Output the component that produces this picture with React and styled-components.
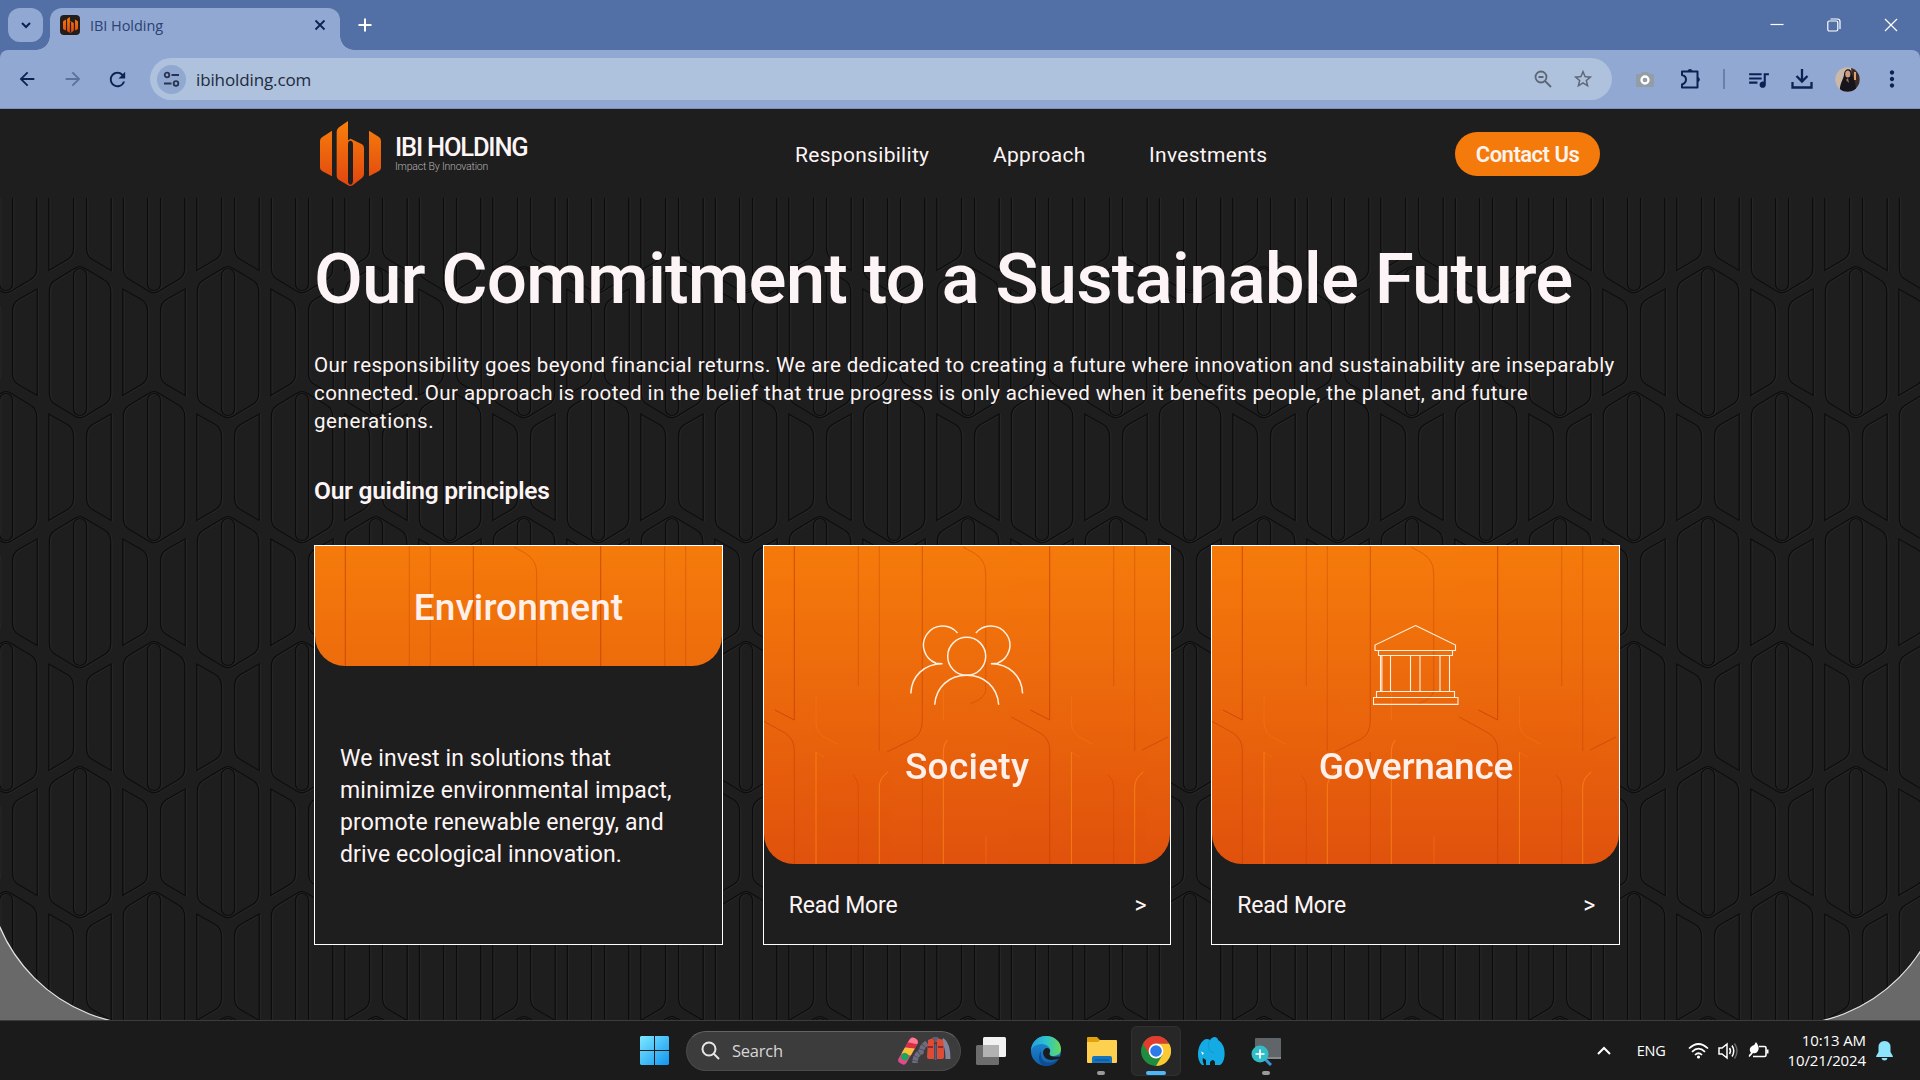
import React from "react";
import styled, { createGlobalStyle } from "styled-components";
import { MdArrowBack, MdArrowForward, MdRefresh, MdStarBorder, MdMoreVert, MdQueueMusic } from "react-icons/md";

const GlobalStyle = createGlobalStyle`
  * { box-sizing: border-box; }
  body { margin: 0; overflow: hidden; background: #1e1e1e; }
  h1, h2, h3, p { margin: 0; }
  svg { display: block; flex: none; }
`;

const brand = `"Roboto", "Liberation Sans", sans-serif`;
const system = `"Open Sans", "Noto Sans", sans-serif`;

const Screen = styled.div`
  width: 1920px;
  height: 1080px;
  display: flex;
  flex-direction: column;
  overflow: hidden;
  font-family: ${brand};
  color: #fdf5f5;
`;

/* ---------- Browser ---------- */

const TabStrip = styled.div`
  height: 50px;
  flex: none;
  display: flex;
  padding: 8px 1px 0 8px;
  background: #5270a6;
  color: #fff;
`;

const TabSearch = styled.div`
  width: 35px;
  height: 34px;
  border-radius: 12px;
  background: #91a8d3;
  display: grid;
  place-items: center;
`;

const Tab = styled.div`
  width: 290px;
  height: 42px;
  margin-left: 7px;
  padding: 0 13px 8px 10px;
  border-radius: 12px 12px 0 0;
  background: #91a8d3;
  display: flex;
  align-items: center;
  position: relative;
  &::before,
  &::after {
    content: "";
    position: absolute;
    bottom: 0;
    width: 14px;
    height: 14px;
  }
  &::before {
    left: -14px;
    background: radial-gradient(circle at 0 0, transparent 13.5px, #91a8d3 14px);
  }
  &::after {
    right: -14px;
    background: radial-gradient(circle at 100% 0, transparent 13.5px, #91a8d3 14px);
  }
`;

const Favicon = styled.div`
  width: 20px;
  height: 20px;
  border-radius: 4px;
  background: #241d1b;
  display: grid;
  place-items: center;
`;

const TabTitle = styled.span`
  flex: 1;
  margin-left: 10px;
  padding-top: 1px;
  font: 400 14.5px/20px ${system};
  letter-spacing: -0.05px;
  color: #2b4272;
`;

const NewTab = styled.div`
  width: 50px;
  height: 34px;
  display: grid;
  place-items: center;
`;

const WindowControls = styled.div`
  margin-left: auto;
  display: flex;
  height: 34px;
`;

const Control = styled.div`
  width: 57px;
  display: grid;
  place-items: center;
`;

const ToolbarWrap = styled.div`
  height: 59px;
  flex: none;
  background: #5270a6;
`;

const Toolbar = styled.div`
  height: 59px;
  display: flex;
  align-items: center;
  padding-left: 4px;
  border-radius: 8px 8px 0 0;
  border-bottom: 1px solid #7f8fb8;
  background: #91a8d3;
  color: #0b2352;
`;

const ToolCell = styled.div`
  width: ${(p) => p.$w}px;
  flex: none;
  display: grid;
  place-items: center;
  opacity: ${(p) => (p.$dim ? 0.4 : 1)};
`;

const Omnibox = styled.div`
  width: 1462px;
  height: 42px;
  margin: 0 10px 0 10px;
  padding: 0 9px 0 7px;
  border-radius: 21px;
  background: #aec1dd;
  display: flex;
  align-items: center;
  color: #5d6674;
`;

const SiteInfo = styled.div`
  width: 29px;
  height: 29px;
  border-radius: 50%;
  background: #91a8d0;
  display: grid;
  place-items: center;
`;

const Url = styled.span`
  flex: 1;
  margin-left: 10px;
  padding-top: 1px;
  font: 400 17px/24px ${system};
  letter-spacing: -0.12px;
  color: #202b3d;
`;

const Separator = styled.div`
  width: 2px;
  height: 20px;
  background: #6a7fae;
`;

/* ---------- Site ---------- */

const SiteHeader = styled.header`
  height: 89px;
  flex: none;
  display: flex;
  align-items: center;
  padding: 1px 320px 0;
  background: #1e1e1e;
`;

const LogoText = styled.div`
  margin-left: 14px;
  width: 385px;
  padding-bottom: 2px;
`;

const LogoName = styled.div`
  font: 500 25.5px/26px ${brand};
  letter-spacing: -1.2px;
`;

const LogoTag = styled.div`
  font: 300 10.5px/12px ${brand};
  letter-spacing: -0.2px;
  color: #b5b1b1;
  margin-top: 1px;
`;

const Nav = styled.nav`
  display: flex;
  margin-left: 15px;
  padding-top: 2px;
  flex: 1;
`;

const NavLink = styled.a`
  width: ${(p) => p.$w}px;
  font: 400 21px/28px ${brand};
  letter-spacing: 0.3px;
  white-space: nowrap;
`;

const ContactButton = styled.button`
  width: 145px;
  height: 44px;
  padding: 2px 0 0;
  border: 0;
  border-radius: 22px;
  background: #f47a0b;
  color: #fff3ee;
  font: 600 22px/42px ${brand};
  letter-spacing: -0.5px;
`;

const Stage = styled.main`
  height: 822px;
  flex: none;
  display: grid;
  grid-template-columns: minmax(0, 1fr);
  overflow: hidden;
  background: #1e1e1e;
  > * { grid-area: 1 / 1; }
`;

const Content = styled.section`
  padding: 41px 300px 0 314px;
  z-index: 1;
`;

const Heading = styled.h1`
  font: 500 71px/80px ${brand};
  letter-spacing: -0.95px;
  white-space: nowrap;
`;

const Lead = styled.p`
  margin-top: 32px;
  font: 400 20.5px/28px ${brand};
`;

const Line = styled.span`
  display: block;
  white-space: nowrap;
  letter-spacing: ${(p) => p.$ls || 0}px;
`;

const SubHeading = styled.h2`
  margin-top: 41px;
  font: 600 24.5px/30px ${brand};
  letter-spacing: -0.25px;
`;

const Cards = styled.div`
  display: grid;
  grid-template-columns: repeat(3, 1fr);
  gap: 40px;
  margin-top: 39px;
`;

const Card = styled.article`
  height: 400px;
  border: 1px solid #fff;
  background: #1e1e1e;
  overflow: hidden;
`;

const Panel = styled.div`
  height: ${(p) => p.$h}px;
  border-radius: 0 0 30px 30px;
  overflow: hidden;
  display: grid;
  background: linear-gradient(#f57b0b, #e0520d) 0 0 / 100% 318px no-repeat;
  > * { grid-area: 1 / 1; }
`;

const PanelBody = styled.div`
  z-index: 1;
  display: flex;
  flex-direction: column;
  align-items: center;
  padding-top: ${(p) => p.$pt}px;
`;

const CardTitle = styled.h3`
  margin-top: ${(p) => p.$mt || 0}px;
  font: 500 37px/44px ${brand};
  letter-spacing: ${(p) => p.$ls}px;
  color: #fff0ec;
`;

const CardText = styled.p`
  margin: 77px 0 0 25px;
  font: 400 23px/32px ${brand};
`;

const CardFooter = styled.div`
  height: 80px;
  padding: 3px 24px 0 25px;
  display: flex;
  align-items: center;
  justify-content: space-between;
  font: 400 23px/32px ${brand};
  letter-spacing: -0.2px;
`;

/* ---------- Taskbar ---------- */

const Taskbar = styled.footer`
  height: 60px;
  flex: none;
  display: flex;
  align-items: center;
  padding: 0 27px 0 640px;
  background: #1b1b1b;
  border-top: 1px solid #3c3c3c;
  font-family: ${system};
  color: #fff;
`;

const SearchBox = styled.div`
  width: 275px;
  height: 40px;
  margin: 0 2.5px 0 17px;
  padding: 0 9px 0 14px;
  border-radius: 20px;
  border: 1px solid #4b4b4b;
  border-top-color: #646464;
  background: #3c3c3c;
  display: flex;
  align-items: center;
`;

const SearchLabel = styled.span`
  flex: 1;
  margin-left: 12px;
  font-size: 16.5px;
  letter-spacing: -0.25px;
  color: #d6d6d6;
`;

const AppCell = styled.div`
  width: 55px;
  height: 50px;
  display: flex;
  flex-direction: column;
  align-items: center;
  padding-top: 10px;
`;

const ActiveCell = styled(AppCell)`
  width: 50px;
  margin: 0 2.5px;
  border-radius: 6px;
  background: #272727;
  box-shadow: inset 0 0 0 1px #303030;
`;

const Indicator = styled.div`
  width: ${(p) => (p.$active ? 20 : 8)}px;
  height: 4px;
  margin-top: auto;
  margin-bottom: 1px;
  border-radius: 2px;
  background: ${(p) => (p.$active ? "#4cb8f5" : "#9a9a9a")};
`;

const Tray = styled.div`
  margin-left: auto;
  display: flex;
  align-items: center;
`;

const Lang = styled.span`
  margin: 0 22px 0 26px;
  font-size: 14.5px;
  letter-spacing: -0.2px;
`;

const TrayIcons = styled.div`
  display: flex;
  gap: 9px;
`;

const Clock = styled.div`
  margin: 0 10px 2px 19px;
  font-size: 15px;
  line-height: 20px;
  letter-spacing: -0.12px;
  text-align: right;
`;

/* ---------- Drawings ---------- */

const LogoMark = ({ width, id, hole = "#1e1e1e" }) => (
  <svg width={width} height={(width * 197) / 183} viewBox="0 0 183 197">
    <defs>
      <linearGradient id={id} gradientUnits="userSpaceOnUse" x1="0" y1="0" x2="0" y2="197">
        <stop offset="0" stopColor="#f8800c" />
        <stop offset="1" stopColor="#e0450f" />
      </linearGradient>
    </defs>
    <g fill={`url(#${id})`}>
      <path d="M0 60Q0 53 6 49L36 29V166L6 150Q0 146 0 140Z" />
      <path d="M50 32Q50 24 57 19L84 0V58L92 53L126 70Q132 74 132 81V160Q132 167 126 171L98 193Q91 197 84 193L56 176Q50 172 50 165Z" />
      <path d="M147 29L177 48Q183 52 183 60V140Q183 146 177 150L147 166Z" />
    </g>
    <path d="M84 70Q84 59 91 59Q99 59 99 70V180Q98 191 91 191Q84 190 84 180Z" fill={hole} />
  </svg>
);

const HexCell = ({ x, y }) => (
  <g transform={`translate(${x} ${y})`}>
    <path d="M-30.7 25.5Q-30.7 17.5 -24.5 14L-5 2.2Q0 -1 5 2.2L24.5 14Q30.7 17.5 30.7 25.5V127Q30.7 135 24.5 138.5L5 150.2Q0 153.4 -5 150.2L-24.5 138.5Q-30.7 135 -30.7 127Z" />
    <rect x="-6.5" y="2.5" width="13" height="147" rx="6.5" />
    <path d="M-31.2 148L-12.5 158.5Q-6.5 162 -6.5 170V232Q-6.5 240 -12.5 243.500L-31.2 254.500Z" />
    <path d="M31.2 148L12.5 158.5Q6.5 162 6.5 170V232Q6.5 240 12.5 243.500L31.2 254.500Z" />
  </g>
);

const Backdrop = () => (
  <svg width="1920" height="822" viewBox="0 198 1920 822">
    <defs>
      <pattern id="hex" patternUnits="userSpaceOnUse" x="6" y="141" width="148" height="250">
        <g fill="none" stroke="#262626" strokeWidth="1" transform="translate(1.3 0.6)">
          <HexCell x={74} y={125} /><HexCell x={74} y={-125} />
          <HexCell x={0} y={0} /><HexCell x={148} y={0} />
          <HexCell x={0} y={-250} /><HexCell x={148} y={-250} />
        </g>
        <g fill="none" stroke="#0b0b0b" strokeWidth="1.2">
          <HexCell x={74} y={125} /><HexCell x={74} y={-125} />
          <HexCell x={0} y={0} /><HexCell x={148} y={0} />
          <HexCell x={0} y={-250} /><HexCell x={148} y={-250} />
        </g>
      </pattern>
    </defs>
    <rect y="198" width="1920" height="822" fill="url(#hex)" />
    <path d="M-13 864A161 161 0 0 0 148 1025H-13Z" fill="#696969" stroke="#e4e4e4" strokeWidth="1.2" />
    <path d="M1946 864A161 161 0 0 1 1785 1025H1946Z" fill="#696969" stroke="#e4e4e4" strokeWidth="1.2" />
  </svg>
);

const PanelLines = () => (
  <svg width="407" height="318" viewBox="0 0 407 318" fill="none" strokeWidth="1">
    {[-255.4, 0, 255.4].map((dx) => (
      <g key={dx} transform={`translate(${dx} 0)`}>
        <g stroke="#c23f06" opacity="0.75">
          <path d="M11 164L30.300 174V0" />
          <path d="M-8 171L21 187Q30.300 193 30.300 204V318" opacity="0.8" />
        </g>
        <g stroke="#c23f06" opacity="0.4">
          <path d="M94.300 0V140M115.300 0V205" />
          <path d="M89 229Q94.300 234 94.300 241V318" />
        </g>
        <g stroke="#ff8c1a" opacity="0.7">
          <path d="M52 206V318" />
          <path d="M124 226Q115.300 232 115.300 241V318" />
          <path d="M52 150V176Q52 186 60 191L73 198M52 206L60 211" opacity="0.4" />
        </g>
      </g>
    ))}
    <g stroke="#c23f06" opacity="0.6">
      <path d="M158.300 0V174Q158.300 188 149 193L123 206" />
      <path d="M158.300 206V318M199 1L210 7Q221.700 14 221.700 27V144Q221.700 152 206 158" opacity="0.7" />
      <path d="M378 204L404 191" />
    </g>
    <g stroke="#ff8c1a" opacity="0.7">
      <path d="M183 194Q179.300 198 179.300 206V318" />
      <path d="M179.300 144V174M222 290V318" opacity="0.5" />
    </g>
  </svg>
);

const SocietyIcon = () => (
  <svg width="114" height="80" viewBox="0 0 114 80" fill="none" stroke="#fff0e0" strokeWidth="1.5">
    <circle cx="56.700" cy="31.300" r="19" />
    <path d="M24.700 79.700C26 62 39 50.300 56.700 50.300S87.400 62 88.700 79.700" />
    <path d="M47.500 8A19.200 19.200 0 1 0 26 38.200L32.500 38.800C14 39 1.500 51 .8 68.500" />
    <path d="M65.900 8A19.200 19.200 0 1 1 87.400 38.200L80.900 38.800C99.400 39 111.900 51 112.600 68.500" />
  </svg>
);

const BankIcon = () => (
  <svg width="86" height="80" viewBox="0 0 86 80" fill="none" stroke="#fff0e0" strokeWidth="1.1">
    <path d="M42.500 .6L82.500 20V25.500H2V20Z" />
    <path d="M5.500 25.500H79.500V30.500H5.500ZM3.500 66.500H81.500V72.500H3.500ZM.5 72.500H85V79.400H.5Z" />
    <path d="M7.500 30.500V66.500M8.900 30.500V66.500M17.500 30.500V66.500M37.500 30.500V66.500M47 30.500V66.500M67 30.500V66.500M76.500 30.500V66.500" />
  </svg>
);

const Stroke = ({ size, d, w = 2, color = "currentColor", children }) => (
  <svg width={size} height={size} viewBox={`0 0 ${size} ${size}`} fill="none" stroke={color} strokeWidth={w}>
    {d && <path d={d} />}
    {children}
  </svg>
);

const Avatar = () => (
  <svg width="25" height="25" viewBox="0 0 25 25">
    <clipPath id="face"><circle cx="12.500" cy="12.500" r="12.200" /></clipPath>
    <g clipPath="url(#face)">
      <rect width="25" height="25" fill="#cbb9a8" />
      <path d="M16 0H25V25H18Z" fill="#3b2c29" />
      <path d="M5 25C4 18 8 13 9 8C9 1 17 0 17 8C20 13 21 19 21 25Z" fill="#15151b" />
      <ellipse cx="12.800" cy="7" rx="2.600" ry="3.500" fill="#d09a80" />
      <path d="M11 13L13 11L14 16Z" fill="#a76f5b" />
      <path d="M19 5H21V13H19Z" fill="#d8a16e" />
    </g>
  </svg>
);

const WindowsLogo = () => (
  <svg width="29" height="29" viewBox="0 0 29 29">
    <defs><linearGradient id="win" gradientUnits="userSpaceOnUse" x1="0" y1="0" x2="29" y2="29">
      <stop offset="0" stopColor="#7de8ff" /><stop offset="1" stopColor="#1195ef" />
    </linearGradient></defs>
    <path d="M1 0H14V14H0V1ZM15 0H28L29 1V14H15ZM0 15H14V29H1L0 28ZM15 15H29V28L28 29H15Z" fill="url(#win)" />
  </svg>
);

const SnowGear = () => (
  <svg width="54" height="28" viewBox="0 0 54 28">
    <g transform="rotate(30 10 14)">
      <rect x="6.500" y="-1" width="9" height="29" rx="3.500" fill="#e8468c" />
      <path d="M6.500 4Q6.500 -1 11 -1T15.500 4L6.500 9Z" fill="#ff7b92" />
      <path d="M6.500 6L15.500 3V8L6.500 12Z" fill="#d92f45" />
      <path d="M6.500 12L15.500 8V16L6.500 19Z" fill="#f8c13c" />
      <circle cx="11" cy="20" r="3.800" fill="#1fa35a" />
    </g>
    <path d="M30 6Q25 9 24 15Q18 18 18 26" stroke="#6d6c80" strokeWidth="5.500" strokeDasharray="4 .5" fill="none" />
    <path d="M45 3Q51 7 51 22" stroke="#85849c" strokeWidth="5" fill="none" />
    <path d="M31 3L36 1L38 6L40 1L46 3L47 13V20Q47 22 45 22H40V5H37V22H32Q30 22 30 20Z" fill="#df4c35" />
    <path d="M36 1L38.500 6L41 1V0H36ZM37.500 7H39.500V23H37.500Z" fill="#59607d" />
    <path d="M31 9H36V11H31ZM41 9H46V11H41Z" fill="#8b2b2b" />
  </svg>
);

const TaskView = () => (
  <svg width="30" height="30" viewBox="0 0 30 30">
    <rect x="7" y="1" width="23" height="20" rx="1.500" fill="#f2f2f2" />
    <rect x="0" y="9" width="23" height="20" rx="1.500" fill="#6d6d6d" />
    <path d="M7 9H23V21H7Z" fill="#b2b2b2" />
  </svg>
);

const Edge = () => (
  <svg width="30" height="30" viewBox="0 0 30 30">
    <defs>
      <linearGradient id="eg1" x1="0" y1=".4" x2="1" y2=".4"><stop offset="0" stopColor="#249ee0" /><stop offset=".5" stopColor="#2cc3cf" /><stop offset="1" stopColor="#68d957" /></linearGradient>
      <linearGradient id="eg2" x1="0" y1="0" x2="0" y2="1"><stop offset="0" stopColor="#1d91dc" /><stop offset="1" stopColor="#115ea8" /></linearGradient>
    </defs>
    <circle cx="15" cy="15" r="15" fill="url(#eg2)" />
    <path d="M0 15C0 6 7 0 15 0C24 0 30 6 30 13C30 18 26 20 22 20C18 20 18 18 19 16C20 12 16 8 11 8C5 8 1 11 0 15Z" fill="url(#eg1)" />
    <path d="M10 18C10 25 15 28 22 26C25 25 27 23 28 22C26 27 21 30 15 30C8 29 6 22 10 15Z" fill="#0d4d94" />
    <path d="M12 17C12 14 14 12 16 12C19 12 20 15 18.500 17C18 20 21 21.500 28 20.500Q30 20.500 28 22.500C20 25.500 13 24 12 17Z" fill="#1b1b1b" />
  </svg>
);

const Folder = () => (
  <svg width="31" height="28" viewBox="0 0 31 28">
    <path d="M1 2Q1 1 2 1H11L14 4H29V14H1Z" fill="#dfa20d" />
    <path d="M1 6H12L14 4H30Q31 4 31 5V26Q31 27 30 27H2Q1 27 1 26Z" fill="#fdd04f" />
    <path d="M6 27V22Q6 20 8 20H24Q26 20 26 22V27Z" fill="#1673bd" />
    <path d="M9 24H23" stroke="#0b4f8e" />
  </svg>
);

const Chrome = () => (
  <svg width="30" height="30" viewBox="0 0 30 30">
    <circle cx="15" cy="15" r="15" fill="#1e8e3e" />
    <path d="M28 7.500H15L21.500 18.700L15 30A15 15 0 0 0 28 7.500Z" fill="#fcc934" />
    <path d="M15 7.500H28A15 15 0 0 0 2 7.500L8.500 18.700Z" fill="#e33b2e" />
    <circle cx="15" cy="15" r="7.400" fill="#fff" /><circle cx="15" cy="15" r="5.800" fill="#2c79e8" />
  </svg>
);

const Elephant = () => (
  <svg width="28" height="30" viewBox="0 0 28 30">
    <path d="M5 29C0 25 0 15 3 9C6 3 10 2 13 4C16 -1 21 1 21 4C27 8 28 14 27.500 20C27 25 25 28 23 29H18V26Q16 22 13 26V29H9V24L6 22Q5 25 7 29Z" fill="#14abe4" />
    <path d="M13 4C10 8 11 16 17 17" stroke="#0e93cc" strokeWidth=".8" fill="none" />
    <path d="M4 15.500L7 17L5.500 19Z" fill="#fff" />
  </svg>
);

const ScreenZoom = () => (
  <svg width="32" height="30" viewBox="0 0 32 30">
    <rect x="5" y="2" width="26" height="21" rx="1" fill="#60656a" />
    <path d="M5 21H31V23H5Z" fill="#85898c" />
    <path d="M15 23L21 29" stroke="#3b94d6" strokeWidth="3" />
    <circle cx="10" cy="18" r="8.500" fill="#31bcc8" />
    <path d="M10 13.500V22.500M5.500 18H14.500" stroke="#fff" strokeWidth="1.700" />
  </svg>
);

const leadLines = [
  ["Our responsibility goes beyond financial returns. We are dedicated to creating a future where innovation and sustainability are inseparably", 0.39],
  ["connected. Our approach is rooted in the belief that true progress is only achieved when it benefits people, the planet, and future", 0.41],
  ["generations.", 0.6],
];

const environmentLines = [
  ["We invest in solutions that", 0.1],
  ["minimize environmental impact,", 0.2],
  ["promote renewable energy, and", 0.17],
  ["drive ecological innovation.", 0.14],
];

function LinkCard({ title, icon, spacing }) {
  return (
    <Card>
      <Panel $h={318}>
        <PanelLines />
        <PanelBody $pt={79}>
          {icon}
          <CardTitle $mt={40} $ls={spacing}>{title}</CardTitle>
        </PanelBody>
      </Panel>
      <CardFooter><span>Read More</span><span>&gt;</span></CardFooter>
    </Card>
  );
}

function Browser() {
  return (
    <>
      <TabStrip>
        <TabSearch><Stroke size={12} d="M2 4L6 8L10 4" color="#0b2352" /></TabSearch>
        <Tab>
          <Favicon><LogoMark width={15} id="fav" hole="#241d1b" /></Favicon>
          <TabTitle>IBI Holding</TabTitle>
          <Stroke size={14} d="M2.500 2.500L11.500 11.500M11.500 2.500L2.500 11.500" color="#0b2352" w={1.8} />
        </Tab>
        <NewTab><Stroke size={14} d="M7 .5V13.500M.5 7H13.500" /></NewTab>
        <WindowControls>
          <Control><Stroke size={14} d="M.5 6.500H13.500" w={1.2} /></Control>
          <Control>
            <Stroke size={14} w={1.2}><rect x=".8" y="3" width="10" height="10" rx="1.500" /><path d="M3.500 1H10.500Q13 1 13 3.500V11" /></Stroke>
          </Control>
          <Control><Stroke size={14} d="M1 1L13 13M13 1L1 13" w={1.2} /></Control>
        </WindowControls>
      </TabStrip>
      <ToolbarWrap>
        <Toolbar>
          <ToolCell $w={46}><MdArrowBack size={22} /></ToolCell>
          <ToolCell $w={45} $dim><MdArrowForward size={22} /></ToolCell>
          <ToolCell $w={45}><MdRefresh size={23} /></ToolCell>
          <Omnibox>
            <SiteInfo>
              <Stroke size={17} w={1.8} color="#26344d"><circle cx="4" cy="4" r="2.300" /><path d="M8.500 4H16M1 12.500H8.500" /><circle cx="13" cy="12.500" r="2.300" /></Stroke>
            </SiteInfo>
            <Url>ibiholding.com</Url>
            <ToolCell $w={40}>
              <Stroke size={18} w={1.8}><circle cx="7" cy="7" r="5.500" /><path d="M11 11L17 17M4.500 7H9.500" /></Stroke>
            </ToolCell>
            <ToolCell $w={40}><MdStarBorder size={22} /></ToolCell>
          </Omnibox>
          <ToolCell $w={46}>
            <svg width="18" height="16" viewBox="0 0 18 16"><path d="M0 3H5L6 1H12L13 3H18V16H0Z" fill="#929da5" /><circle cx="9" cy="9" r="3.500" fill="none" stroke="#fff" strokeWidth="2.300" /></svg>
          </ToolCell>
          <ToolCell $w={46}>
            <svg width="22" height="22" viewBox="0 0 22 22"><path d="M2 3.500H17.500V19.500H2V16.500Q6 15 6 11.500T2 7Z" fill="none" stroke="currentColor" strokeWidth="2" strokeLinejoin="round" /><path d="M7.500 3A2.600 2.600 0 0 1 12.500 3ZM18 9A2.600 2.600 0 0 1 18 14Z" fill="currentColor" /></svg>
          </ToolCell>
          <ToolCell $w={20}><Separator /></ToolCell>
          <ToolCell $w={48}><MdQueueMusic size={25} /></ToolCell>
          <ToolCell $w={40}><Stroke size={22} w={2.3} d="M11 1V13M5.500 8L11 13.500L16.500 8M1.500 14V19.500H20.500V14" /></ToolCell>
          <ToolCell $w={50}><Avatar /></ToolCell>
          <ToolCell $w={40}><MdMoreVert size={26} /></ToolCell>
        </Toolbar>
      </ToolbarWrap>
    </>
  );
}

function Site() {
  return (
    <>
      <SiteHeader>
        <LogoMark width={61} id="logo" />
        <LogoText>
          <LogoName>IBI HOLDING</LogoName>
          <LogoTag>Impact By Innovation</LogoTag>
        </LogoText>
        <Nav>
          <NavLink $w={198}>Responsibility</NavLink>
          <NavLink $w={156}>Approach</NavLink>
          <NavLink $w={150}>Investments</NavLink>
        </Nav>
        <ContactButton>Contact Us</ContactButton>
      </SiteHeader>
      <Stage>
        <Backdrop />
        <Content>
          <Heading>Our Commitment to a Sustainable Future</Heading>
          <Lead>{leadLines.map(([t, ls]) => <Line key={t} $ls={ls}>{t}</Line>)}</Lead>
          <SubHeading>Our guiding principles</SubHeading>
          <Cards>
            <Card>
              <Panel $h={120}>
                <PanelLines />
                <PanelBody $pt={40}><CardTitle $ls={0.1}>Environment</CardTitle></PanelBody>
              </Panel>
              <CardText>{environmentLines.map(([t, ls]) => <Line key={t} $ls={ls}>{t}</Line>)}</CardText>
            </Card>
            <LinkCard title="Society" icon={<SocietyIcon />} spacing={0.3} />
            <LinkCard title="Governance" icon={<BankIcon />} spacing={-0.3} />
          </Cards>
        </Content>
      </Stage>
    </>
  );
}

export default function App() {
  return (
    <Screen>
      <GlobalStyle />
      <Browser />
      <Site />
      <Taskbar>
        <WindowsLogo />
        <SearchBox>
          <Stroke size={19} w={2} color="#e6e6e6"><circle cx="8" cy="8" r="6.500" /><path d="M12.500 12.500L18 18" /></Stroke>
          <SearchLabel>Search</SearchLabel>
          <SnowGear />
        </SearchBox>
        <AppCell><TaskView /></AppCell>
        <AppCell><Edge /></AppCell>
        <AppCell><Folder /><Indicator /></AppCell>
        <ActiveCell><Chrome /><Indicator $active /></ActiveCell>
        <AppCell><Elephant /></AppCell>
        <AppCell><ScreenZoom /><Indicator /></AppCell>
        <Tray>
          <Stroke size={14} d="M1 10L7 4L13 10" w={2} />
          <Lang>ENG</Lang>
          <TrayIcons>
            <svg width="21" height="18" viewBox="0 0 21 18" fill="none" stroke="#fff" strokeWidth="1.700"><path d="M1 6.500Q10.500 -2.500 20 6.500M4 9.800Q10.500 3.500 17 9.800M7 13Q10.500 9.500 14 13" /><circle cx="10.500" cy="15" r="1.600" fill="#fff" stroke="none" /></svg>
            <svg width="21" height="18" viewBox="0 0 21 18" fill="none" stroke="#fff" strokeWidth="1.500"><path d="M1 6H4L9 2V16L4 12H1ZM11.500 6Q13.500 9 11.500 12M14 3.500Q17.500 9 14 14.500" /><path d="M16.500 1.500Q21.500 9 16.500 16.500" stroke="#666" /></svg>
            <svg width="21" height="18" viewBox="0 0 21 18"><path d="M11 4.500H16.500Q18 4.500 18 6V13Q18 14.500 16.500 14.500H5" fill="none" stroke="#fff" strokeWidth="1.600" /><path d="M18.500 7.500H20.500V11.500H18.500Z" fill="#fff" /><path d="M8 0Q12 5 10 9Q8 12 5 11Q2 15 1 15Q0 13 3 11Q0 7 4 4Q7 3 8 0Z" fill="#fff" /></svg>
          </TrayIcons>
          <Clock>10:13 AM<br />10/21/2024</Clock>
          <svg width="17" height="20" viewBox="0 0 17 20" fill="#8ee4fb"><path d="M8.500 0Q14.500 0 14.500 6.500V11L16.800 15V16H.2V15L2.500 11V6.500Q2.500 0 8.500 0ZM5.500 17H11.500Q11 19.500 8.500 19.500T5.500 17Z" /></svg>
        </Tray>
      </Taskbar>
    </Screen>
  );
}
